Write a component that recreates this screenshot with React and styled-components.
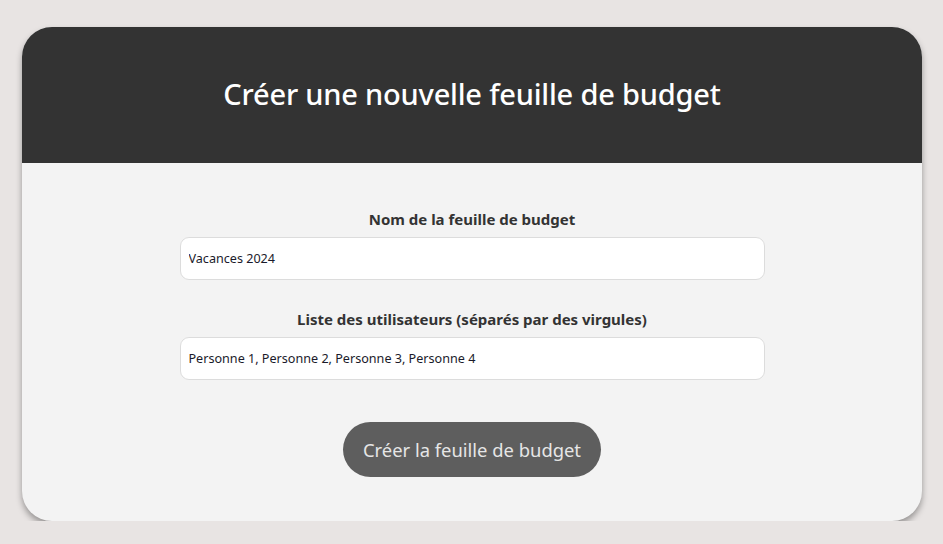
import React from "react";
import styled, { createGlobalStyle } from "styled-components";

const Global = createGlobalStyle`
  html, body { margin: 0; padding: 0; background: #e8e4e3; }
  body { font-family: "Noto Sans", "Open Sans", sans-serif; }
  * { box-sizing: border-box; }
`;

const Page = styled.div`
  padding: 27px 21px 0 22px;
`;

const Card = styled.div`
  width: 900px;
  margin: 0 auto;
  border-radius: 30px;
  overflow: hidden;
  background: #f3f3f3;
  box-shadow: 0 4px 6px rgba(0, 0, 0, 0.35);
`;

const Header = styled.div`
  background: #333333;
  height: 136px;
  padding-bottom: 3px;
  display: flex;
  align-items: center;
  justify-content: center;
`;

const Title = styled.h1`
  margin: 0;
  color: #ffffff;
  font-size: 29px;
  font-weight: 500;
  letter-spacing: -0.2px;
`;

const Form = styled.form`
  width: 585px;
  margin: 0 auto;
  padding: 46px 0 44px;
  display: flex;
  flex-direction: column;
  align-items: stretch;
`;

const Field = styled.div`
  display: flex;
  flex-direction: column;
  gap: 8px;
  margin-bottom: ${(p) => p.$mb || 0}px;
`;

const Label = styled.label`
  text-align: center;
  font-size: 15px;
  font-weight: 700;
  color: #333;
  line-height: 20px;
`;

const Input = styled.input`
  height: 43px;
  border: 1px solid #dcdcdc;
  border-radius: 9px;
  background: #fff;
  padding: 0 8px;
  font-family: inherit;
  font-size: 12.6px;
  color: #1a1a2a;
  outline: none;
`;

const Button = styled.button`
  align-self: center;
  height: 55px;
  width: 258px;
  padding: 0;
  border: none;
  border-radius: 28px;
  background: #5e5e5e;
  color: #e6e6e6;
  font-family: inherit;
  font-size: 18.4px;
  cursor: pointer;
`;

export default function App() {
  return (
    <>
      <Global />
      <Page>
        <Card>
          <Header>
            <Title>Créer une nouvelle feuille de budget</Title>
          </Header>
          <Form onSubmit={(e) => e.preventDefault()}>
            <Field $mb={29}>
              <Label>Nom de la feuille de budget</Label>
              <Input defaultValue="Vacances 2024" />
            </Field>
            <Field $mb={42}>
              <Label>Liste des utilisateurs (séparés par des virgules)</Label>
              <Input defaultValue="Personne 1, Personne 2, Personne 3, Personne 4" />
            </Field>
            <Button type="submit">Créer la feuille de budget</Button>
          </Form>
        </Card>
      </Page>
    </>
  );
}
